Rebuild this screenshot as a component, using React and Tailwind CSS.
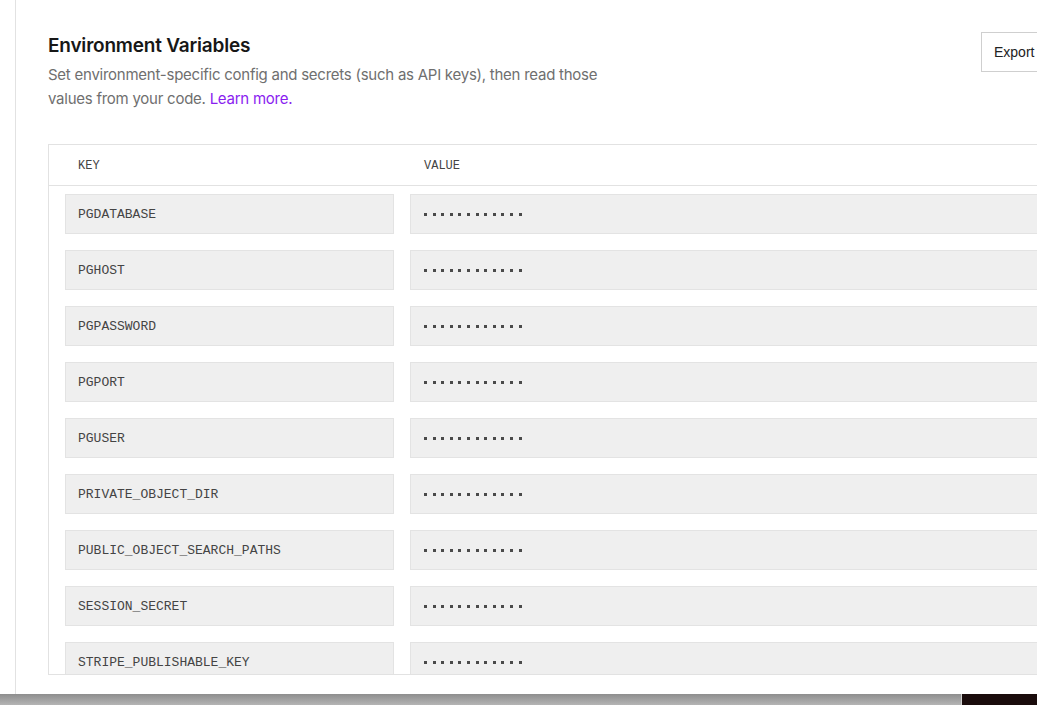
const vars = [
  "PGDATABASE",
  "PGHOST",
  "PGPASSWORD",
  "PGPORT",
  "PGUSER",
  "PRIVATE_OBJECT_DIR",
  "PUBLIC_OBJECT_SEARCH_PATHS",
  "SESSION_SECRET",
  "STRIPE_PUBLISHABLE_KEY",
];

function Dots() {
  return (
    <div className="flex items-center gap-[5.6px] pt-[1px]">
      {Array.from({ length: 12 }).map((_, i) => (
        <span key={i} className="block w-[3px] h-[3px] bg-[#4a4a4a]" />
      ))}
    </div>
  );
}

export default function App() {
  return (
    <div className="w-[1037px] h-[705px] overflow-hidden bg-white flex flex-col" style={{ fontFamily: "Inter, 'Noto Sans', sans-serif" }}>
      <div className="h-[694px] flex shrink-0">
        <div className="w-[16px] shrink-0 border-r border-[#e2e2e2]" />
        <div className="flex-1 pl-[32px] pt-[32px] min-w-0">
          {/* header */}
          <div className="flex justify-between items-start">
            <div>
              <h1 className="text-[19px] leading-[28px] font-semibold text-[#171717] tracking-[-0.2px]">Environment Variables</h1>
              <p className="mt-[3px] text-[15px] leading-[24px] text-[#6f6f6f] w-[560px] tracking-[-0.25px]">
                Set environment-specific config and secrets (such as API keys), then read those values from your code.{" "}
                <span className="text-[#8a1df0]">Learn more.</span>
              </p>
            </div>
            <button className="shrink-0 h-[40px] w-[80px] border border-[#cfcfcf] bg-white text-[14px] text-[#222] text-left pl-[12px] mr-[-24px]" style={{ fontFamily: "'Liberation Sans', Arial, sans-serif" }}>
              Export
            </button>
          </div>

          {/* table */}
          <div className="mt-[33px] w-[1060px] h-[531px] border border-[#e2e2e2] overflow-hidden" style={{ fontFamily: "'Liberation Mono', monospace" }}>
            <div className="h-[41px] flex items-center border-b border-[#e2e2e2] text-[12px] text-[#444] pt-[1px]">
              <div className="w-[375px] pl-[29px]">KEY</div>
              <div>VALUE</div>
            </div>
            {vars.map((k) => (
              <div key={k} className="flex gap-[16px] px-[16px] py-[8px]">
                <div className="w-[329px] h-[40px] shrink-0 bg-[#efefef] border border-[#e3e3e3] flex items-center pl-[12px] pt-[1px] text-[13px] text-[#444]">
                  {k}
                </div>
                <div className="flex-1 h-[40px] bg-[#efefef] border border-[#e3e3e3] flex items-center pl-[13px]">
                  <Dots />
                </div>
              </div>
            ))}
          </div>
        </div>
      </div>
      <div className="flex-1 flex">
        <div className="w-[962px] bg-gradient-to-b from-[#8e8e8e] to-[#b4b4b4] border-r border-[#d0d0d0]" />
        <div className="flex-1 bg-[#1a0c0c]" />
      </div>
    </div>
  );
}
